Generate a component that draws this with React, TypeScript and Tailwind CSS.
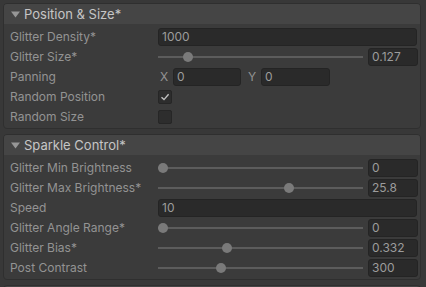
import React from 'react';

// ============================================================================
// Types
// ============================================================================

type Row =
  | { kind: 'text'; label: string; value: string }
  | { kind: 'slider'; label: string; value: string; pos: number }
  | { kind: 'vec2'; label: string; x: string; y: string }
  | { kind: 'toggle'; label: string; checked: boolean };

const positionRows: Row[] = [
  { kind: 'text', label: 'Glitter Density*', value: '1000' },
  { kind: 'slider', label: 'Glitter Size*', value: '0.127', pos: 0.127 },
  { kind: 'vec2', label: 'Panning', x: '0', y: '0' },
  { kind: 'toggle', label: 'Random Position', checked: true },
  { kind: 'toggle', label: 'Random Size', checked: false },
];

const sparkleRows: Row[] = [
  { kind: 'slider', label: 'Glitter Min Brightness', value: '0', pos: 0 },
  { kind: 'slider', label: 'Glitter Max Brightness*', value: '25.8', pos: 0.646 },
  { kind: 'text', label: 'Speed', value: '10' },
  { kind: 'slider', label: 'Glitter Angle Range*', value: '0', pos: 0 },
  { kind: 'slider', label: 'Glitter Bias*', value: '0.332', pos: 0.328 },
  { kind: 'slider', label: 'Post Contrast', value: '300', pos: 0.297 },
];

// ============================================================================
// App
// ============================================================================

export default function App() {
  return (
    <div
      className="w-[426px] h-[287px] overflow-hidden bg-[#383838] pt-[3px] pl-[3px] pr-[5px] flex flex-col gap-[5px] text-[12px]"
      style={{ fontFamily: 'Inter, "Liberation Sans", sans-serif' }}
    >
      <Section title="Position & Size*" rows={positionRows} />
      <Section title="Sparkle Control*" rows={sparkleRows} />
      <div className="h-[20px] flex-none rounded-t-[4px] border border-[#2f2f2f] bg-[#454545]" />
    </div>
  );
}

// ============================================================================
// Section
// ============================================================================

function Section({ title, rows }: { title: string; rows: Row[] }) {
  return (
    <div className="flex-none rounded-[4px] border border-[#2f2f2f] bg-[#3b3b3b] overflow-hidden">
      <div className="h-[20px] bg-[#454545] flex items-center pl-[6px] gap-[3px]">
        <svg width="11" height="9" viewBox="0 0 11 9">
          <path d="M1 1.5 L10 1.5 L5.5 7.5 Z" fill="#969696" />
        </svg>
        <span className="text-[13px] text-[#c6c6c6] leading-none">{title}</span>
      </div>
      <div className="pt-[3px] pb-[1px]">
        {rows.map((r) => (
          <FieldRow key={r.label} row={r} />
        ))}
      </div>
    </div>
  );
}

function FieldRow({ row }: { row: Row }) {
  return (
    <div className="h-[20px] flex items-center pl-[6px] pr-[3px]">
      <div className="w-[148px] flex-none text-[#939393] truncate">{row.label}</div>
      <div className="flex-1 flex items-center">
        {row.kind === 'text' && <Field value={row.value} className="flex-1" />}
        {row.kind === 'slider' && (
          <>
            <Slider pos={row.pos} />
            <Field value={row.value} className="w-[50px] ml-[5px]" />
          </>
        )}
        {row.kind === 'vec2' && (
          <>
            <span className="w-[15px] pl-[2px] text-[#939393]">X</span>
            <Field value={row.x} className="w-[68px]" />
            <span className="w-[20px] pl-[7px] text-[#939393]">Y</span>
            <Field value={row.y} className="w-[69px]" />
          </>
        )}
        {row.kind === 'toggle' && <Toggle checked={row.checked} />}
      </div>
    </div>
  );
}

// ============================================================================
// Controls
// ============================================================================

function Field({ value, className }: { value: string; className?: string }) {
  return (
    <div
      className={
        'h-[18px] rounded-[3px] border border-[#242424] bg-[#2a2a2a] px-[3px] flex items-center text-[#9c9c9c] ' +
        (className ?? '')
      }
    >
      {value}
    </div>
  );
}

function Slider({ pos }: { pos: number }) {
  return (
    <div className="relative h-[18px] w-[205px] flex-none flex items-center">
      <div className="h-[2px] w-full bg-[#5c5c5c]" />
      <div
        className="absolute top-[4px] w-[10px] h-[10px] rounded-full bg-[#7a7a7a]"
        style={{ left: `${pos * 195}px` }}
      />
    </div>
  );
}

function Toggle({ checked }: { checked: boolean }) {
  return (
    <div className="w-[14px] h-[14px] rounded-[2px] border border-[#262626] bg-[#2d2d2d] flex items-center justify-center">
      {checked && (
        <svg width="10" height="10" viewBox="0 0 10 10">
          <path d="M1.5 5.2 L4 7.6 L8.6 2.2" fill="none" stroke="#c0c0c0" strokeWidth="1.4" />
        </svg>
      )}
    </div>
  );
}
